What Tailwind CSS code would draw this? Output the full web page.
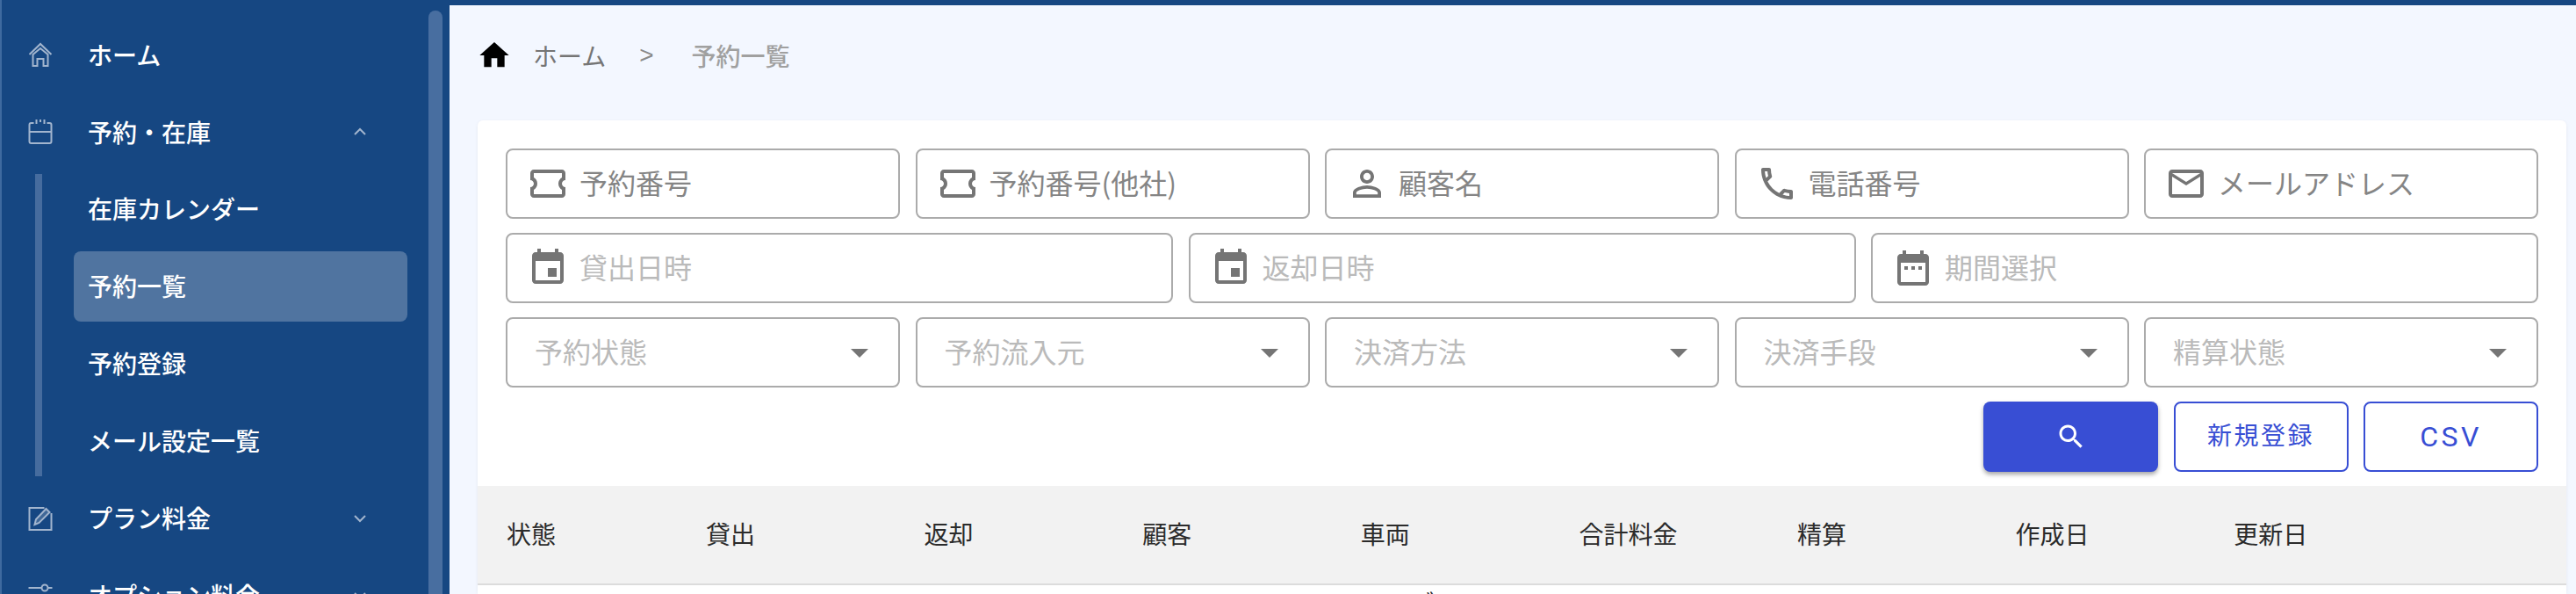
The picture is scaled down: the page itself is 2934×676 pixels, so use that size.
<!DOCTYPE html>
<html lang="ja">
<head>
  <meta charset="UTF-8">
  <title>予約一覧</title>
  <script src="https://cdn.jsdelivr.net/npm/@tailwindcss/browser@4"></script>
</head>
<body class="h-[676px] overflow-hidden bg-[#f3f7ff] font-['Noto_Sans_CJK_JP',sans-serif]">
  <div class="flex h-[676px] overflow-hidden">

    <!-- sidebar -->
    <aside class="relative h-full w-[512px] shrink-0 overflow-hidden border-l-2 border-[#3f6a9f] bg-[#164782] text-[28px] font-medium text-white">
      <div class="absolute right-[8px] top-[12px] h-[700px] w-[16px] rounded-t-lg bg-[#486ea0]"></div>
      <nav class="flex flex-col pt-[18px]">
        <a class="flex h-[88px] items-center">
          <svg class="ml-[30px] mr-[40px] h-[30px] w-[28px] shrink-0 text-[#a2b5ce]" viewBox="0 0 27 30" fill="none" stroke="currentColor" stroke-width="2"><path d="M1 15 13.500 3 26 15M5 15 13.500 8 22 15v13h-5v-8h-7v8H5z"/></svg>
          <span>ホーム</span>
        </a>
        <a class="flex h-[88px] items-center">
          <svg class="ml-[30px] mr-[40px] h-[30px] w-[28px] shrink-0 text-[#a2b5ce]" viewBox="0 0 27 30" fill="none" stroke="currentColor" stroke-width="2"><path d="M9 1v5M18 1v5M13.500 1v3M6 5H3a2 2 0 0 0-2 2v19a2 2 0 0 0 2 2h21a2 2 0 0 0 2-2V7a2 2 0 0 0-2-2h-3M1 15h25"/></svg>
          <span>予約・在庫</span>
          <svg class="ml-auto mr-[95px] h-[10px] w-[14px] text-[#a2b5ce]" viewBox="0 0 14 10" fill="none" stroke="currentColor" stroke-width="2"><path d="M1 8 7 2l6 6"/></svg>
        </a>
        <div class="relative">
          <div class="absolute left-[38px] top-[4px] h-[344px] w-[8px] bg-[#466c9e]"></div>
          <a class="flex h-[88px] items-center pb-[2px] pl-[98px]">在庫カレンダー</a>
          <a class="my-[4px] ml-[82px] flex h-[80px] w-[380px] items-center rounded-[8px] bg-[#5074a0] pb-[2px] pl-[16px]">予約一覧</a>
          <a class="flex h-[88px] items-center pb-[2px] pl-[98px]">予約登録</a>
          <a class="flex h-[88px] items-center pb-[2px] pl-[98px]">メール設定一覧</a>
        </div>
        <a class="flex h-[88px] items-center">
          <svg class="ml-[30px] mr-[40px] h-[28px] w-[28px] shrink-0 text-[#a2b5ce]" viewBox="0 0 27 28" fill="none" stroke="currentColor" stroke-width="2"><path d="M18 2H1v25h25V8"/><path d="M7 21 8.500 15 20 3l4 4-12 12z" fill="currentColor" fill-opacity=".3"/></svg>
          <span class="pb-[2px]">プラン料金</span>
          <svg class="ml-auto mr-[95px] h-[10px] w-[14px] text-[#a2b5ce]" viewBox="0 0 14 10" fill="none" stroke="currentColor" stroke-width="2"><path d="m1 2 6 6 6-6"/></svg>
        </a>
        <a class="flex h-[88px] items-center">
          <svg class="ml-[30px] mr-[40px] h-[28px] w-[28px] shrink-0 text-[#a2b5ce]" viewBox="0 0 27 28" fill="none" stroke="currentColor" stroke-width="2"><path d="M0 5h15M22 5h5"/><circle cx="18.500" cy="5" r="3.500"/><path d="M0 19h5M12 19h15"/><circle cx="8.500" cy="19" r="3.500"/></svg>
          <span class="pb-[2px]">オプション料金</span>
          <svg class="ml-auto mr-[95px] h-[10px] w-[14px] text-[#a2b5ce]" viewBox="0 0 14 10" fill="none" stroke="currentColor" stroke-width="2"><path d="m1 2 6 6 6-6"/></svg>
        </a>
      </nav>
    </aside>

    <!-- main -->
    <main class="min-w-0 flex-1 border-t-[6px] border-[#164782]">
      <div class="flex h-[131px] items-center pb-[17px] pl-[31px] text-[28px]">
        <svg class="h-[40px] w-[40px] text-black" viewBox="0 0 24 24" fill="currentColor"><path d="M10 20v-6h4v6h5v-8h3L12 3 2 12h3v8z"/></svg>
        <span class="ml-[24px] text-[#757575]">ホーム</span>
        <span class="ml-[38px] font-['Liberation_Sans',sans-serif] text-[#8a8a8a]">&gt;</span>
        <span class="ml-[43px] font-medium text-[#a0a0a0]">予約一覧</span>
      </div>

      <section class="ml-[32px] mr-[11px] h-[539px] overflow-hidden rounded-t-[6px] bg-white pt-[32px] shadow-[0_1px_4px_rgba(0,0,0,0.06)]">
        <div class="flex flex-col gap-[16px] px-[32px] text-[32px] leading-none">
          <div class="grid grid-cols-5 gap-[17.500px] text-[#858585]">
            <label class="flex h-[80px] items-center gap-[12px] rounded-[8px] border-2 border-[#ababab] pl-[22px]">
              <svg class="h-[48px] w-[48px] text-[#757575]" viewBox="0 0 24 24" fill="currentColor"><path d="M22 10V6c0-1.110-.9-2-2-2H4c-1.100 0-1.990.89-1.990 2v4c1.100 0 1.990.9 1.990 2s-.89 2-2 2v4c0 1.100.9 2 2 2h16c1.100 0 2-.9 2-2v-4c-1.100 0-2-.9-2-2s.9-2 2-2zm-2-1.460c-1.190.69-2 1.990-2 3.460s.81 2.770 2 3.460V18H4v-2.540c1.190-.69 2-1.990 2-3.460 0-1.480-.8-2.770-1.990-3.460L4 6h16v2.540z"/></svg>
              <span class="pb-[4px]">予約番号</span>
            </label>
            <label class="flex h-[80px] items-center gap-[12px] rounded-[8px] border-2 border-[#ababab] pl-[22px]">
              <svg class="h-[48px] w-[48px] text-[#757575]" viewBox="0 0 24 24" fill="currentColor"><path d="M22 10V6c0-1.110-.9-2-2-2H4c-1.100 0-1.990.89-1.990 2v4c1.100 0 1.990.9 1.990 2s-.89 2-2 2v4c0 1.100.9 2 2 2h16c1.100 0 2-.9 2-2v-4c-1.100 0-2-.9-2-2s.9-2 2-2zm-2-1.460c-1.190.69-2 1.990-2 3.460s.81 2.770 2 3.460V18H4v-2.540c1.190-.69 2-1.990 2-3.460 0-1.480-.8-2.770-1.990-3.460L4 6h16v2.540z"/></svg>
              <span class="pb-[4px]">予約番号(他社)</span>
            </label>
            <label class="flex h-[80px] items-center gap-[12px] rounded-[8px] border-2 border-[#ababab] pl-[22px]">
              <svg class="h-[48px] w-[48px] text-[#757575]" viewBox="0 0 24 24" fill="currentColor"><path d="M12 5.900c1.160 0 2.100.94 2.100 2.100s-.94 2.100-2.100 2.100S9.900 9.160 9.900 8s.94-2.100 2.100-2.100m0 9c2.970 0 6.100 1.460 6.100 2.100v1.100H5.900V17c0-.64 3.130-2.100 6.100-2.100M12 4C9.790 4 8 5.790 8 8s1.790 4 4 4 4-1.790 4-4-1.790-4-4-4zm0 9c-2.670 0-8 1.340-8 4v3h16v-3c0-2.660-5.330-4-8-4z"/></svg>
              <span class="pb-[4px]">顧客名</span>
            </label>
            <label class="flex h-[80px] items-center gap-[12px] rounded-[8px] border-2 border-[#ababab] pl-[22px]">
              <svg class="h-[48px] w-[48px] text-[#757575]" viewBox="0 0 24 24" fill="currentColor"><path d="M6.540 5c.06.89.21 1.760.45 2.590l-1.200 1.200c-.41-1.200-.67-2.470-.76-3.790h1.510m9.860 12.020c.85.24 1.720.39 2.600.45v1.490c-1.320-.09-2.590-.35-3.800-.75l1.200-1.190M7.500 3H4c-.55 0-1 .45-1 1 0 9.390 7.610 17 17 17 .55 0 1-.45 1-1v-3.490c0-.55-.45-1-1-1-1.240 0-2.450-.2-3.570-.57-.1-.04-.21-.05-.31-.05-.26 0-.51.1-.71.29l-2.200 2.200c-2.830-1.450-5.150-3.760-6.590-6.590l2.200-2.200c.28-.28.36-.67.25-1.020C8.700 6.450 8.500 5.250 8.500 4c0-.55-.45-1-1-1z"/></svg>
              <span class="pb-[4px]">電話番号</span>
            </label>
            <label class="flex h-[80px] items-center gap-[12px] rounded-[8px] border-2 border-[#ababab] pl-[22px]">
              <svg class="h-[48px] w-[48px] text-[#757575]" viewBox="0 0 24 24" fill="currentColor"><path d="M20 4H4c-1.100 0-1.990.9-1.990 2L2 18c0 1.100.9 2 2 2h16c1.100 0 2-.9 2-2V6c0-1.100-.9-2-2-2zm0 14H4V8l8 5 8-5v10zm-8-7L4 6h16l-8 5z"/></svg>
              <span class="pb-[4px]">メールアドレス</span>
            </label>
          </div>

          <div class="grid grid-cols-3 gap-[17.500px] text-[#bababa]">
            <label class="flex h-[80px] items-center gap-[12px] rounded-[8px] border-2 border-[#ababab] pl-[22px]">
              <svg class="h-[48px] w-[48px] text-[#757575]" viewBox="0 0 24 24" fill="currentColor"><path d="M17 12h-5v5h5v-5zM16 1v2H8V1H6v2H5c-1.110 0-1.990.9-1.990 2L3 19c0 1.100.89 2 2 2h14c1.100 0 2-.9 2-2V5c0-1.100-.9-2-2-2h-1V1h-2zm3 18H5V8h14v11z"/></svg>
              <span class="pb-[4px]">貸出日時</span>
            </label>
            <label class="flex h-[80px] items-center gap-[12px] rounded-[8px] border-2 border-[#ababab] pl-[22px]">
              <svg class="h-[48px] w-[48px] text-[#757575]" viewBox="0 0 24 24" fill="currentColor"><path d="M17 12h-5v5h5v-5zM16 1v2H8V1H6v2H5c-1.110 0-1.990.9-1.990 2L3 19c0 1.100.89 2 2 2h14c1.100 0 2-.9 2-2V5c0-1.100-.9-2-2-2h-1V1h-2zm3 18H5V8h14v11z"/></svg>
              <span class="pb-[4px]">返却日時</span>
            </label>
            <label class="flex h-[80px] items-center gap-[12px] rounded-[8px] border-2 border-[#ababab] pl-[22px]">
              <svg class="h-[48px] w-[48px] text-[#757575]" viewBox="0 0 24 24" fill="currentColor"><path d="M9 11H7v2h2v-2zm4 0h-2v2h2v-2zm4 0h-2v2h2v-2zm2-7h-1V2h-2v2H8V2H6v2H5c-1.110 0-1.990.9-1.990 2L3 20c0 1.100.89 2 2 2h14c1.100 0 2-.9 2-2V6c0-1.100-.9-2-2-2zm0 16H5V9h14v11z"/></svg>
              <span class="pb-[4px]">期間選択</span>
            </label>
          </div>

          <div class="grid grid-cols-5 gap-[17.500px] text-[#bababa]">
            <label class="flex h-[80px] items-center justify-between rounded-[8px] border-2 border-[#ababab] pl-[31px] pr-[20px]">
              <span class="pb-[4px]">予約状態</span>
              <svg class="h-[48px] w-[48px] text-[#757575]" viewBox="0 0 24 24" fill="currentColor"><path d="M7 10l5 5 5-5z"/></svg>
            </label>
            <label class="flex h-[80px] items-center justify-between rounded-[8px] border-2 border-[#ababab] pl-[31px] pr-[20px]">
              <span class="pb-[4px]">予約流入元</span>
              <svg class="h-[48px] w-[48px] text-[#757575]" viewBox="0 0 24 24" fill="currentColor"><path d="M7 10l5 5 5-5z"/></svg>
            </label>
            <label class="flex h-[80px] items-center justify-between rounded-[8px] border-2 border-[#ababab] pl-[31px] pr-[20px]">
              <span class="pb-[4px]">決済方法</span>
              <svg class="h-[48px] w-[48px] text-[#757575]" viewBox="0 0 24 24" fill="currentColor"><path d="M7 10l5 5 5-5z"/></svg>
            </label>
            <label class="flex h-[80px] items-center justify-between rounded-[8px] border-2 border-[#ababab] pl-[31px] pr-[20px]">
              <span class="pb-[4px]">決済手段</span>
              <svg class="h-[48px] w-[48px] text-[#757575]" viewBox="0 0 24 24" fill="currentColor"><path d="M7 10l5 5 5-5z"/></svg>
            </label>
            <label class="flex h-[80px] items-center justify-between rounded-[8px] border-2 border-[#ababab] pl-[31px] pr-[20px]">
              <span class="pb-[4px]">精算状態</span>
              <svg class="h-[48px] w-[48px] text-[#757575]" viewBox="0 0 24 24" fill="currentColor"><path d="M7 10l5 5 5-5z"/></svg>
            </label>
          </div>

          <div class="flex justify-end gap-[17.500px] font-['Roboto','Noto_Sans_CJK_JP',sans-serif] text-[28px] tracking-[2.500px] text-[#384ed4]">
            <button class="flex h-[80px] w-[199px] items-center justify-center rounded-[8px] bg-[#384ed4] text-white shadow-[0_3px_5px_rgba(0,0,0,0.35)]">
              <svg class="h-[36px] w-[36px]" viewBox="0 0 24 24" fill="currentColor"><path d="M15.500 14h-.79l-.28-.27C15.410 12.590 16 11.110 16 9.500 16 5.910 13.090 3 9.500 3S3 5.910 3 9.500 5.910 16 9.500 16c1.610 0 3.090-.59 4.230-1.570l.27.28v.79l5 4.990L20.490 19l-4.990-5zm-6 0C7.010 14 5 11.990 5 9.500S7.010 5 9.500 5 14 7.010 14 9.500 11.990 14 9.500 14z"/></svg>
            </button>
            <button class="h-[80px] w-[199px] rounded-[8px] border-2 border-[#384ed4]">新規登録</button>
            <button class="h-[80px] w-[199px] rounded-[8px] border-2 border-[#384ed4] text-[32px] tracking-[3.500px]">CSV</button>
          </div>
        </div>

        <!-- table -->
        <div class="mt-[16px] flex h-[113px] items-center border-b-2 border-[#dcdcdc] bg-[#f2f2f2] pb-[4px] pl-[33px] text-[28px] text-[#2b2b2b]">
          <span class="w-[227px]">状態</span>
          <span class="w-[248.600px]">貸出</span>
          <span class="w-[248.600px]">返却</span>
          <span class="w-[248.600px]">顧客</span>
          <span class="w-[248.600px]">車両</span>
          <span class="w-[248.600px]">合計料金</span>
          <span class="w-[248.600px]">精算</span>
          <span class="w-[248.600px]">作成日</span>
          <span class="w-[248.600px]">更新日</span>
        </div>
        <div class="pl-[1006px] pt-[6px] text-[28px] leading-none text-[#2b2b2b]">ハイブリッド</div>
      </section>
    </main>
  </div>
</body>
</html>
